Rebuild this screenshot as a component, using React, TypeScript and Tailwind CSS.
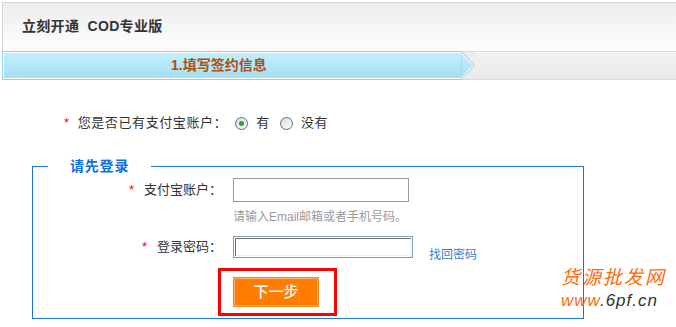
import React from 'react';

// 签约第一步：填写签约信息
function Radio({ checked }: { checked?: boolean }) {
  return (
    <span className="flex h-[13px] w-[13px] items-center justify-center rounded-full border border-[#4f6f92] bg-gradient-to-br from-[#d8d8d8] to-[#ffffff]">
      {checked && <span className="h-[5px] w-[5px] rounded-full bg-[#2da62d]" />}
    </span>
  );
}

function Star() {
  return <span className="text-[13px] text-[#f00]">*</span>;
}

export default function App() {
  return (
    <div className="relative h-[327px] w-[676px] overflow-hidden bg-white font-['Liberation_Sans','Noto_Sans_CJK_SC',sans-serif] text-[#333]">
      {/* 顶部标题 */}
      <div className="ml-[2px] mt-[2px] flex h-[49px] items-center border-l border-t border-[#d6d6d6] bg-gradient-to-b from-[#ededed] to-[#fefefe] pb-[2px] pl-[19px] text-[14px] font-bold tracking-[0.3px]">
        立刻开通&nbsp;&nbsp;COD专业版
      </div>

      {/* 步骤条 */}
      <div className="ml-[2px] flex h-[29px]">
        <div className="flex w-[459px] items-center border-y border-l border-[#8dd4ec] bg-gradient-to-b from-[#c2f0fd] to-[#a4dff3] pl-[168px] text-[14px] font-bold text-[#b24d0c] shadow-[inset_1px_1px_0_#fff,inset_0_-1px_0_#fff]">
          1.填写签约信息
        </div>
        <svg width="14" height="29" viewBox="0 0 14 29" className="shrink-0 bg-[#ececec]">
          <defs>
            <linearGradient id="g" x1="0" y1="0" x2="0" y2="1">
              <stop offset="0" stopColor="#c2f0fd" />
              <stop offset="1" stopColor="#a4dff3" />
            </linearGradient>
          </defs>
          <line x1="0" y1="0.5" x2="14" y2="0.5" stroke="#d9d9d9" />
          <line x1="0" y1="28.5" x2="14" y2="28.5" stroke="#d9d9d9" />
          <polygon points="0,0.5 13.5,14.5 0,28.5" fill="url(#g)" stroke="#8dd4ec" />
          <polyline points="0,1.8 12,14.5 0,27.2" fill="none" stroke="#fff" />
        </svg>
        <div className="flex-1 border-y border-[#d9d9d9] bg-gradient-to-b from-[#f2f2f2] to-[#e9e9e9] shadow-[inset_0_1px_0_#fff]" />
      </div>

      {/* 是否已有支付宝账户 */}
      <div className="ml-[64px] mt-[34px] flex h-[18px] items-center text-[13px] tracking-[0.6px]">
        <Star />
        <span className="ml-[8px]">您是否已有支付宝账户：</span>
        <span className="ml-[8px]"><Radio checked /></span>
        <span className="ml-[8px]">有</span>
        <span className="ml-[10px]"><Radio /></span>
        <span className="ml-[8px]">没有</span>
      </div>

      {/* 登录区域 */}
      <fieldset className="ml-[32px] mt-[24px] w-[552px] border border-[#1874e0] pb-[2px]">
        <legend className="ml-[15px] px-[22px] text-[14px] font-bold leading-[20px] tracking-[0.8px] text-[#0b6fe0]">
          请先登录
        </legend>

        <div className="mt-[2px] flex items-center">
          <div className="flex w-[189px] items-center justify-end text-[13px]">
            <Star />
            <span className="ml-[10px]">支付宝账户：</span>
          </div>
          <input className="ml-[11px] h-[24px] w-[176px] border border-[#9a9a9a] outline-none" />
        </div>
        <div className="ml-[200px] mt-[8px] text-[12px] leading-[14px] text-[#9b9b9b]">
          请输入Email邮箱或者手机号码。
        </div>

        <div className="mt-[12px] flex items-start">
          <div className="flex h-[22px] w-[189px] items-center justify-end text-[13px]">
            <Star />
            <span className="ml-[10px]">登录密码：</span>
          </div>
          <input
            type="password"
            className="ml-[11px] h-[22px] w-[180px] border border-[#7f9db9] outline-none shadow-[inset_0_0_0_1px_#fff,inset_2px_2px_0_#716f64,inset_-2px_-2px_0_#f1efe2]"
          />
          <a className="ml-[16px] mt-[12px] text-[12px] leading-[14px] text-[#3b7bd6]">找回密码</a>
        </div>

        <div className="ml-[185px] mt-[6px] h-[48px] w-[119px] border-[3px] border-[#f00] pl-[12px] pt-[6px]">
          <button className="flex h-[30px] w-[86px] items-center justify-center border border-[#ff8a1c] bg-[#ff7d00] text-[15px] font-medium text-white shadow-[inset_0_0_0_1px_#ffad66]">
            下一步
          </button>
        </div>
      </fieldset>

      {/* 水印 */}
      <div className="absolute left-[561px] top-[268px] leading-none">
        <div className="text-[19px] italic tracking-[2px] text-[#ff6a0a]">货源批发网</div>
        <div className="mt-[5px] text-[17px] italic tracking-[1px]">
          <span className="text-[#ff6a0a]">www</span>
          <span className="text-[#333]">.6pf.cn</span>
        </div>
      </div>
    </div>
  );
}
